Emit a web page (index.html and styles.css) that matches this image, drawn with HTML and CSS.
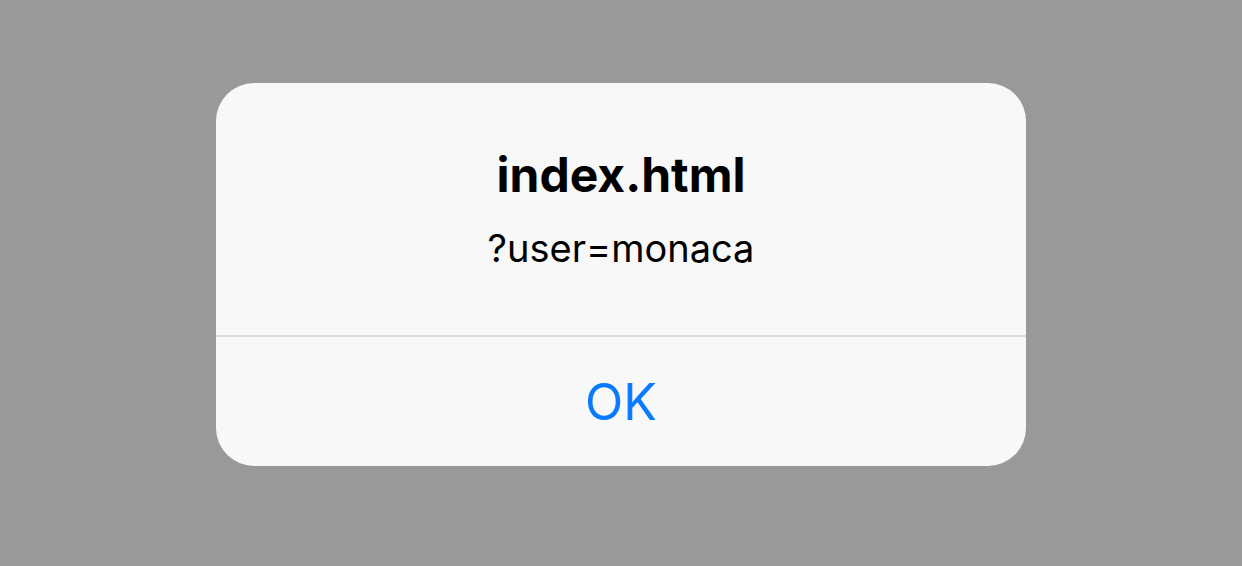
FILE: index.html
```html
<!DOCTYPE html>
<html>
<head>
<meta charset="utf-8">
<link rel="stylesheet" href="styles.css">
</head>
<body>
<div class="overlay">
  <div class="alert">
    <div class="alert-content">
      <div class="alert-title">index.html</div>
      <div class="alert-message">?user=monaca</div>
    </div>
    <div class="alert-actions">
      <button class="alert-button">OK</button>
    </div>
  </div>
</div>
</body>
</html>
```
FILE: styles.css
```css
html, body {
  margin: 0;
  padding: 0;
  height: 100%;
}
body {
  background: #999999;
  font-family: Inter, "Noto Sans", sans-serif;
}
.overlay {
  display: flex;
  justify-content: center;
  padding-top: 83px;
}
.alert {
  width: 810px;
  height: 383px;
  background: #f8f8f8;
  border-radius: 38px;
  display: flex;
  flex-direction: column;
  overflow: hidden;
}
.alert-content {
  height: 254px;
  box-sizing: border-box;
  border-bottom: 2px solid #dcdcdc;
  display: flex;
  flex-direction: column;
  align-items: center;
  padding-top: 62px;
}
.alert-title {
  font-weight: 700;
  font-size: 48px;
  line-height: 60px;
  color: #000;
}
.alert-message {
  font-size: 38px;
  line-height: 50px;
  color: #000;
  margin-top: 18px;
}
.alert-actions {
  flex: 1;
  display: flex;
}
.alert-button {
  flex: 1;
  border: none;
  background: transparent;
  font-family: inherit;
  font-size: 50px;
  color: #0a7aff;
  padding: 0;
  cursor: pointer;
}
```
